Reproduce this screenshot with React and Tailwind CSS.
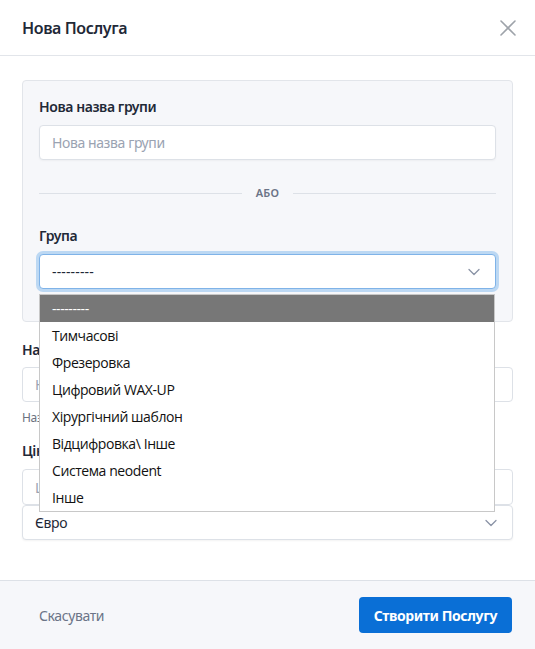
import React from "react";

const font = { fontFamily: '"Noto Sans", "Open Sans", sans-serif', letterSpacing: "-0.025em" };

function Chevron({ className = "" }) {
  return (
    <svg className={className} width="12" height="8" viewBox="0 0 12 8" fill="none">
      <path d="M1 1.5L6 6.5L11 1.5" stroke="currentColor" strokeWidth="1.3" strokeLinecap="round" strokeLinejoin="round" />
    </svg>
  );
}

const options = [
  "Тимчасові",
  "Фрезеровка",
  "Цифровий WAX-UP",
  "Хірургічний шаблон",
  "Відцифровка\\ Інше",
  "Система neodent",
  "Інше",
];

export default function App() {
  return (
    <div className="w-[535px] h-[649px] bg-white flex flex-col overflow-hidden text-[#1f2937]" style={font}>
      {/* Header */}
      <div className="h-[56px] shrink-0 flex items-center justify-between pl-[22px] pr-[19px] border-b border-[#e2e5ea]">
        <h2 className="text-[16px] font-semibold text-[#1f2937]">Нова Послуга</h2>
        <svg width="16" height="16" viewBox="0 0 16 16" fill="none" className="text-[#9ea3aa]">
          <path d="M1 1L15 15M15 1L1 15" stroke="currentColor" strokeWidth="1.6" strokeLinecap="round" />
        </svg>
      </div>

      {/* Body */}
      <div className="flex-1 px-[22px] pt-[24px]">
        <div className="relative">
          <div className="bg-[#f6f7fa] border border-[#e2e5ea] rounded-[4px] px-[16px] pt-[16px] pb-[32px]">
            <label className="block text-[14px] leading-[20px] font-semibold text-[#1f2937]">Нова назва групи</label>
            <div className="mt-[8px] h-[35px] bg-white border border-[#dde1e7] rounded-[4px] shadow-[0_1px_2px_rgba(0,0,0,0.04)] flex items-center px-[12px] text-[14px] text-[#9aa3b2]">
              Нова назва групи
            </div>
            <div className="mt-[24px] h-[18px] flex items-center gap-[14px]">
              <div className="flex-1 h-px bg-[#dde1e7]" />
              <span className="text-[11px] font-semibold text-[#6b7487] tracking-wide">АБО</span>
              <div className="flex-1 h-px bg-[#dde1e7]" />
            </div>
            <label className="block mt-[24px] text-[14px] leading-[20px] font-semibold text-[#1f2937]">Група</label>
            <div className="relative mt-[8px] h-[35px] bg-white border border-[#7fb3e8] rounded-[4px] ring-[3px] ring-[#bcd8f3] flex items-center justify-between px-[12px] text-[14px] text-[#1f2937]">
              <span className="tracking-[0.01em]">---------</span>
              <Chevron className="text-[#8a93a6] mr-[3px]" />
            </div>
          </div>

          {/* Below panel */}
          <label className="block mt-[18px] text-[14px] leading-[20px] font-semibold text-[#1f2937]">Назва послуги</label>
          <div className="mt-[7px] h-[35px] bg-white border border-[#dde1e7] rounded-[4px] flex items-center px-[12px] text-[14px] text-[#9aa3b2]">
            Назва послуги
          </div>
          <p className="mt-[8px] text-[12px] leading-[16px] text-[#6b7280]">Назва послуги, яка буде відображатися</p>
          <label className="block mt-[15px] text-[14px] leading-[20px] font-semibold text-[#1f2937]">Ціна</label>
          <div className="mt-[8px] h-[36px] bg-white border border-[#dde1e7] rounded-[4px] flex items-center px-[12px] text-[14px] text-[#9aa3b2]">
            Ціна
          </div>
          <div className="h-[35px] bg-white border border-[#dde1e7] rounded-[4px] shadow-[0_1px_2px_rgba(0,0,0,0.05)] flex items-center justify-between px-[12px] text-[14px] text-[#1f2937]">
            <span>Євро</span>
            <Chevron className="text-[#8a93a6] mr-[3px]" />
          </div>

          {/* Open dropdown list */}
          <div
            className="absolute left-[17px] top-[214px] w-[456px] bg-white border border-[#c8c8c8] text-[14px] text-[#111]"
            style={{ fontFamily: '"Open Sans", "Noto Sans", sans-serif', letterSpacing: "-0.03em" }}
          >
            <div className="h-[27px] flex items-center px-[12px] bg-[#777777] text-white">---------</div>
            {options.map((o) => (
              <div key={o} className="h-[27px] flex items-center px-[12px]">{o}</div>
            ))}
          </div>
        </div>
      </div>

      {/* Footer */}
      <div className="h-[69px] shrink-0 bg-[#f6f7fa] border-t border-[#dde1e7] flex items-center justify-between pl-[39px] pr-[23px]">
        <span className="text-[14px] text-[#6b7487]">Скасувати</span>
        <button className="h-[36px] px-[15px] rounded-[4px] bg-[#0a6fd6] text-white text-[14px] font-bold">
          Створити Послугу
        </button>
      </div>
    </div>
  );
}
